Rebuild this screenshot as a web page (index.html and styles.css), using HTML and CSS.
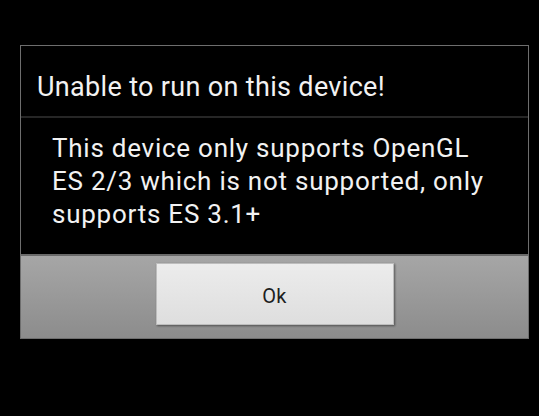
FILE: index.html
```html
<!DOCTYPE html>
<html>
<head>
<meta charset="utf-8">
<link rel="stylesheet" href="styles.css">
</head>
<body>
<div class="dialog">
  <div class="title">Unable to run on this device!</div>
  <div class="message">This device only supports OpenGL ES 2/3 which is not supported, only supports ES 3.1+</div>
  <div class="buttons">
    <div class="btn">Ok</div>
  </div>
</div>
</body>
</html>
```
FILE: styles.css
```css
html, body {
  margin: 0;
  padding: 0;
  background: #000;
  width: 539px;
  height: 416px;
  overflow: hidden;
  font-family: Roboto, "Noto Sans", sans-serif;
}
.dialog {
  margin: 45px 0 0 20px;
  width: 507px;
  border: 1px solid #6e6e6e;
  background: #000;
}
.title {
  height: 72px;
  box-sizing: border-box;
  padding: 26px 0 0 16px;
  font-size: 27px;
  letter-spacing: 0.33px;
  line-height: 30px;
  color: #f2f2f2;
  border-bottom: 2px solid #262626;
}
.message {
  height: 136px;
  box-sizing: border-box;
  padding: 14px 30px 0 31px;
  font-size: 26px;
  letter-spacing: 0.75px;
  line-height: 33px;
  color: #f2f2f2;
}
.buttons {
  height: 84px;
  box-sizing: border-box;
  border-top: 2px solid #6a6a6a;
  background: linear-gradient(#a6a6a6, #8c8c8c);
  display: flex;
  justify-content: center;
  padding-top: 7px;
}
.btn {
  width: 238px;
  height: 62px;
  box-sizing: border-box;
  padding-top: 3px;
  background: linear-gradient(#ececec, #dedede);
  border: 1px solid #bdbdbd;
  box-shadow: 1px 1px 2px rgba(0,0,0,0.45);
  color: #1e1e1e;
  font-size: 20px;
  letter-spacing: 0.4px;
  display: flex;
  align-items: center;
  justify-content: center;
}
```
